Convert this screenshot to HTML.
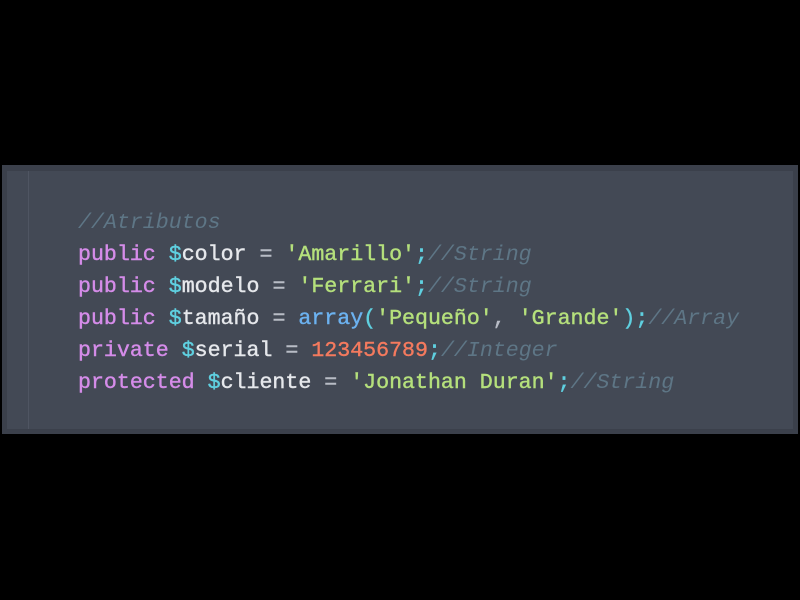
<!DOCTYPE html>
<html><head><meta charset="utf-8"><style>
body{margin:0;width:800px;height:600px;background:#000;overflow:hidden;position:relative}
.panel{position:absolute;left:2px;top:165px;width:796px;height:269px;background:#3b404b}
.inner{position:absolute;left:5px;top:6px;right:5px;bottom:5px;background:#434955}
.guide{position:absolute;left:21px;top:0;bottom:0;width:1px;background:#4f5562}
pre{position:absolute;left:78px;top:207px;margin:0;font-family:"Liberation Mono",monospace;font-size:21.6px;line-height:32px;color:#d7dae0;-webkit-text-stroke:0.4px currentColor}
.k{color:#d58ce9}.d{color:#5fd0e0}.v{color:#e6e8ec}.s{color:#b5e07c}.c{color:#5e7686;font-style:italic;-webkit-text-stroke:0}.f{color:#6cb2f0}.n{color:#f47a5e}.p{color:#5fd0e0}.o{color:#b8bcc6}
</style></head><body>
<div class="panel"><div class="inner"><div class="guide"></div></div></div>
<pre><span class="c">//Atributos</span>
<span class="k">public</span> <span class="d">$</span><span class="v">color</span> <span class="o">=</span> <span class="s">'Amarillo'</span><span class="p">;</span><span class="c">//String</span>
<span class="k">public</span> <span class="d">$</span><span class="v">modelo</span> <span class="o">=</span> <span class="s">'Ferrari'</span><span class="p">;</span><span class="c">//String</span>
<span class="k">public</span> <span class="d">$</span><span class="v">tamaño</span> <span class="o">=</span> <span class="f">array</span><span class="p">(</span><span class="s">'Pequeño'</span><span class="o">,</span> <span class="s">'Grande'</span><span class="p">);</span><span class="c">//Array</span>
<span class="k">private</span> <span class="d">$</span><span class="v">serial</span> <span class="o">=</span> <span class="n">123456789</span><span class="p">;</span><span class="c">//Integer</span>
<span class="k">protected</span> <span class="d">$</span><span class="v">cliente</span> <span class="o">=</span> <span class="s">'Jonathan Duran'</span><span class="p">;</span><span class="c">//String</span></pre>
</body></html>
